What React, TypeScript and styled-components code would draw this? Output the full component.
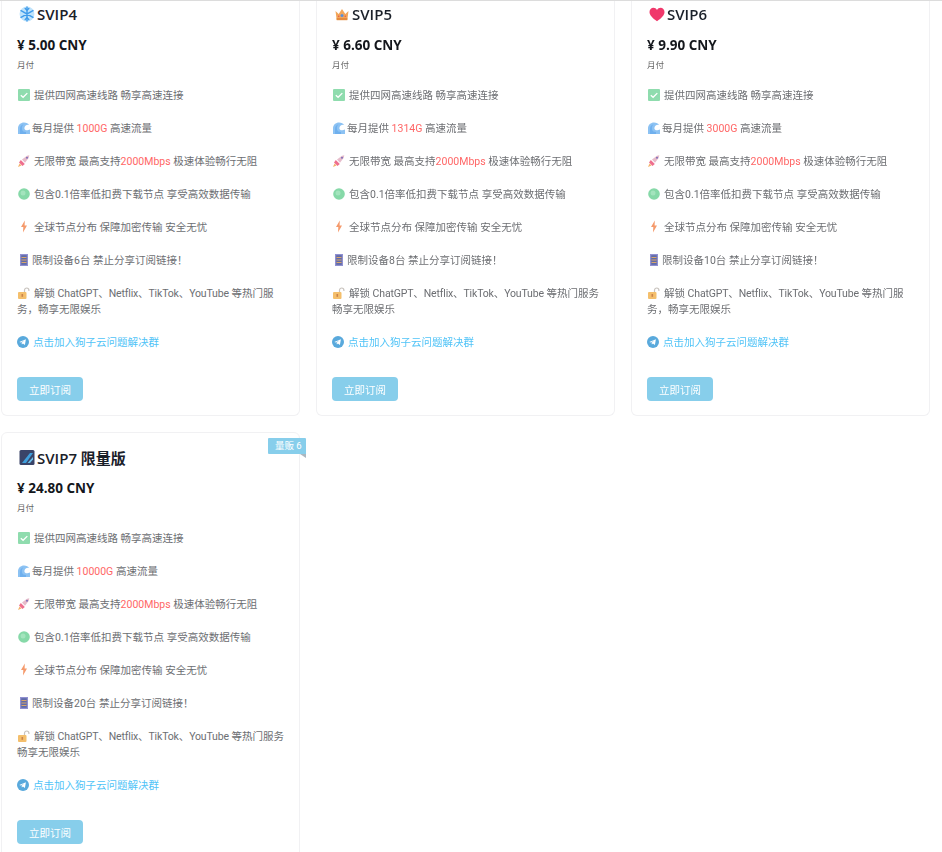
import React from "react";
import styled, { createGlobalStyle } from "styled-components";

const FONT = `Roboto, "Noto Sans CJK SC", sans-serif`;
const HEAD_FONT = `"Open Sans", "Noto Sans CJK SC", sans-serif`;

const GlobalStyle = createGlobalStyle`
  html, body {
    margin: 0;
    padding: 0;
    background: #fff;
    overflow: hidden;
  }
  body {
    font-family: ${FONT};
  }
`;

const SnowIcon = () => (
  <svg width="16" height="16" viewBox="0 0 15 15">
    <circle cx="7.5" cy="7.5" r="7" fill="#bfe3fb" />
    <g stroke="#3f9bea" strokeWidth="1.3" strokeLinecap="round" fill="none">
      <path d="M7.5 1v13M1.9 4.3l11.2 6.4M13.1 4.3L1.9 10.7" />
      <path d="M5.8 2.4l1.7 1.6 1.7-1.6M5.8 12.6l1.7-1.6 1.7 1.6" />
    </g>
  </svg>
);

const CrownIcon = () => (
  <svg width="16" height="15" viewBox="0 0 15 15">
    <path d="M1 4l3.2 3L7.5 2l3.3 5L14 4l-1.2 9H2.2z" fill="#f2a65a" />
    <rect x="2.2" y="11" width="10.6" height="2.2" fill="#e58b3e" />
    <circle cx="7.5" cy="8.6" r="1.5" fill="#5a8fd8" />
    <circle cx="4.2" cy="9.2" r=".8" fill="#e8574f" />
    <circle cx="10.8" cy="9.2" r=".8" fill="#e8574f" />
  </svg>
);

const HeartIcon = () => (
  <svg width="16" height="15" viewBox="0 0 16 15">
    <path d="M8 14.2C3.4 10.8.5 8.2.5 4.9.5 2.5 2.3.8 4.4.8c1.5 0 2.8.8 3.6 2.1C8.8 1.6 10.1.8 11.6.8c2.1 0 3.9 1.7 3.9 4.1 0 3.3-2.9 5.9-7.5 9.3z" fill="#f0386b" />
  </svg>
);

const LimitedIcon = () => (
  <svg width="16" height="15" viewBox="0 0 16 15">
    <rect x=".5" y="0" width="15" height="15" rx="1.5" fill="#3a4468" />
    <path d="M3 13L11 3h3L7 13z" fill="#3f9fdc" />
    <path d="M8.5 13L14 7v2.5L11 13z" fill="#6cc0ea" />
  </svg>
);

const CheckIcon = () => (
  <svg width="12" height="12" viewBox="0 0 12 12">
    <rect width="12" height="12" rx="1" fill="#8fdcae" />
    <path d="M2.8 6.2l2.3 2.1 4.2-4.2" stroke="#fff" strokeWidth="1.3" fill="none" />
  </svg>
);

const WaveIcon = () => (
  <svg width="12" height="12" viewBox="0 0 12 12">
    <path d="M0 12V6.500C0 2.800 2.800 .5 6 .5c2.400 0 4.300 1 5.300 2.500C8.800 2.300 6.200 3.900 6.400 6.500c.2 1.600 1.800 2 3.100 1.700L12 7.500V12z" fill="#8cc2f3" />
    <path d="M2 12V7c0-2.400 1.400-4 3.400-4.700C4 3.800 3.700 5.600 4 7.500c.4 1.800 2.200 2.600 4 2.500V12z" fill="#6fb0ee" />
  </svg>
);

const RocketIcon = () => (
  <svg width="12" height="12" viewBox="0 0 12 12">
    <path d="M4 4.500L9 .8l2.300-.5-.5 2.500L7 7.800z" fill="#e6bccb" />
    <path d="M2.800 5l4 4-2.300 2L1 7.500z" fill="#ee6f8e" />
    <circle cx="9" cy="2.800" r="1" fill="#7e6fb8" />
    <path d="M0 12l1.500-3.500L3.500 10.500z" fill="#f4b26a" />
  </svg>
);

const DotIcon = () => (
  <svg width="12" height="12" viewBox="0 0 12 12">
    <circle cx="6" cy="6" r="5.800" fill="#86d9a8" />
    <circle cx="5" cy="5" r="2.500" fill="#a3e4bd" />
  </svg>
);

const BoltIcon = () => (
  <svg width="12" height="13" viewBox="0 0 12 12">
    <path d="M6.800 0L3 6.500h2.300L5 12l4-7H6.600z" fill="#f59a6c" />
  </svg>
);

const AbacusIcon = () => (
  <svg width="8" height="12" viewBox="0 0 8 12">
    <rect width="8" height="12" fill="#9090d0" />
    <rect x="1.200" y="1.200" width="5.600" height="9.600" fill="#5f6aa8" />
    <path d="M1.500 3.500h5M1.500 6h5M1.500 8.500h5" stroke="#d9a56a" strokeWidth="1" />
  </svg>
);

const UnlockIcon = () => (
  <svg width="12" height="12" viewBox="0 0 12 12">
    <path d="M6.500 5V3.200C6.500 1.800 7.500 1 8.700 1s2.200 .8 2.200 2.200V4" stroke="#c9c4bf" strokeWidth="1.200" fill="none" />
    <rect x="0" y="5" width="8.500" height="7" rx="1" fill="#f4bf6c" />
    <rect x="3.500" y="7" width="1.600" height="2.800" fill="#c9824a" />
  </svg>
);

const TelegramIcon = () => (
  <svg width="12" height="12" viewBox="0 0 12 12">
    <circle cx="6" cy="6" r="6" fill="#59a9dc" />
    <path d="M2.300 6l6.600-2.700-1 5.800-2-1.500-1 1-.3-1.800 2.600-2.300-3.300 2z" fill="#fff" />
  </svg>
);

type Plan = {
  name: string;
  icon: React.ReactNode;
  price: string;
  traffic: string;
  devices: string;
  unlockTail: string;
  stock?: string;
};

const plans: Plan[] = [
  {
    name: "SVIP4",
    icon: <SnowIcon />,
    price: "¥ 5.00 CNY",
    traffic: "1000G",
    devices: "6台",
    unlockTail: "等热门服务，畅享无限娱乐"
  },
  {
    name: "SVIP5",
    icon: <CrownIcon />,
    price: "¥ 6.60 CNY",
    traffic: "1314G",
    devices: "8台",
    unlockTail: "等热门服务畅享无限娱乐"
  },
  {
    name: "SVIP6",
    icon: <HeartIcon />,
    price: "¥ 9.90 CNY",
    traffic: "3000G",
    devices: "10台",
    unlockTail: "等热门服务，畅享无限娱乐"
  },
  {
    name: "SVIP7 限量版",
    icon: <LimitedIcon />,
    price: "¥ 24.80 CNY",
    traffic: "10000G",
    devices: "20台",
    unlockTail: "等热门服务畅享无限娱乐",
    stock: "量贩 6"
  }
];

const App: React.FC = () => {
  return (
    <>
      <GlobalStyle />
      <Page>
        {plans.map(plan => (
          <PlanCard key={plan.name} $clipped={!plan.stock}>
            {plan.stock && (
              <StockRibbon>
                {plan.stock}
                <RibbonFold />
              </StockRibbon>
            )}
            <PlanTitle>
              <TitleIcon>{plan.icon}</TitleIcon>
              {plan.name}
            </PlanTitle>
            <Price>{plan.price}</Price>
            <Period>月付</Period>
            <FeatureList>
              <Feature>
                <IconSlot $left={1} $right={4}><CheckIcon /></IconSlot>
                提供四网高速线路 畅享高速连接
              </Feature>
              <Feature>
                <IconSlot $left={1} $right={2}><WaveIcon /></IconSlot>
                每月提供 <Accent>{plan.traffic}</Accent> 高速流量
              </Feature>
              <Feature>
                <IconSlot $left={1} $right={4}><RocketIcon /></IconSlot>
                无限带宽 最高支持<Accent>2000Mbps</Accent> 极速体验畅行无阻
              </Feature>
              <Feature>
                <IconSlot $left={1} $right={4}><DotIcon /></IconSlot>
                包含0.1倍率低扣费下载节点 享受高效数据传输
              </Feature>
              <Feature>
                <IconSlot $left={1} $right={4}><BoltIcon /></IconSlot>
                全球节点分布 保障加密传输 安全无忧
              </Feature>
              <Feature>
                <IconSlot $left={3} $right={4}><AbacusIcon /></IconSlot>
                限制设备{plan.devices} 禁止分享订阅链接！
              </Feature>
              <Feature>
                <IconSlot $left={1} $right={4}><UnlockIcon /></IconSlot>
                解锁 <LatinRun>ChatGPT、Netflix、TikTok、YouTube</LatinRun> {plan.unlockTail}
              </Feature>
              <JoinLink>
                <IconSlot $left={0} $right={4}><TelegramIcon /></IconSlot>
                点击加入狗子云问题解决群
              </JoinLink>
            </FeatureList>
            <SubscribeButton>立即订阅</SubscribeButton>
          </PlanCard>
        ))}
      </Page>
    </>
  );
};

const Page = styled.div`
  display: grid;
  grid-template-columns: repeat(3, 299px);
  column-gap: 16px;
  row-gap: 16px;
  align-content: start;
  height: 851px;
  overflow: hidden;
  padding-left: 1px;
  border-top: 1px solid #dcdcdc;
  filter: blur(0.5px);
`;

const PlanCard = styled.div<{ $clipped: boolean }>`
  position: relative;
  box-sizing: border-box;
  padding: ${p => (p.$clipped ? "4px" : "15px")} 15px 14px 15px;
  background: #fff;
  border: 1px solid #f1f1f3;
  border-top-width: ${p => (p.$clipped ? "0" : "1px")};
  border-radius: ${p => (p.$clipped ? "0 0 6px 6px" : "6px 6px 0 0")};
`;

const PlanTitle = styled.div`
  display: flex;
  align-items: center;
  height: 18px;
  font-family: ${HEAD_FONT};
  font-size: 15px;
  font-weight: 600;
  color: #1a2029;
`;

const TitleIcon = styled.span`
  display: inline-flex;
  margin: 0 2px;
`;

const Price = styled.div`
  margin-top: 13px;
  height: 19px;
  line-height: 19px;
  font-family: ${HEAD_FONT};
  font-size: 13.5px;
  font-weight: 700;
  color: #14171c;
`;

const Period = styled.div`
  margin-top: 4px;
  height: 12px;
  line-height: 12px;
  font-size: 8.5px;
  color: #666;
`;

const FeatureList = styled.div`
  margin-top: 17px;
  display: flex;
  flex-direction: column;
  row-gap: 17px;
`;

const Feature = styled.div`
  font-size: 10.5px;
  line-height: 16px;
  color: #6c6e72;
`;

const LatinRun = styled.span`
  letter-spacing: -0.15px;
`;

const IconSlot = styled.span<{ $left: number; $right: number }>`
  display: inline-block;
  margin-left: ${p => p.$left}px;
  margin-right: ${p => p.$right}px;
  vertical-align: -2px;
  line-height: 0;
`;

const Accent = styled.span`
  color: #f66;
`;

const JoinLink = styled(Feature)`
  color: #4fc3f7;
`;

const SubscribeButton = styled.button`
  display: block;
  margin-top: 26px;
  width: 66px;
  height: 24px;
  padding: 0;
  border: none;
  border-radius: 4px;
  background: #87ceeb;
  color: #fff;
  font-family: ${FONT};
  font-size: 10.5px;
`;

const StockRibbon = styled.div`
  position: absolute;
  top: 5px;
  right: -7px;
  box-sizing: border-box;
  width: 38px;
  height: 16px;
  padding-left: 7px;
  line-height: 16px;
  background: #87ceeb;
  color: #fff;
  font-size: 9.5px;
  border-radius: 1px 1px 0 1px;
`;

const RibbonFold = styled.span`
  position: absolute;
  right: 0;
  bottom: -4px;
  width: 0;
  height: 0;
  border-top: 4px solid #aab7c0;
  border-left: 6px solid transparent;
`;

export default App;
